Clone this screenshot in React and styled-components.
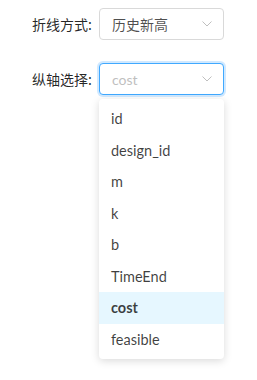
import React from "react";
import styled, { createGlobalStyle } from "styled-components";

const Global = createGlobalStyle`
  html, body { margin: 0; padding: 0; background: #fff; }
  body { font-family: Lato, "Noto Sans CJK SC", sans-serif; font-size: 14px; }
  #root { min-height: 380px; }
`;

const Page = styled.div`
  min-height: 380px;
  box-sizing: border-box;
  padding: 8px 0 0 32px;
  display: flex;
  flex-direction: column;
  gap: 23px;
`;

const Row = styled.div`
  display: flex;
  align-items: center;
  height: 32px;
`;

const Label = styled.label`
  color: rgba(0, 0, 0, 0.85);
  font-size: 14px;
  font-family: "Noto Sans CJK SC", sans-serif;
  width: 67px;
  white-space: nowrap;
`;

const Field = styled.div`
  position: relative;
  width: 125px;
  height: 32px;
`;

const SelectBox = styled.div`
  box-sizing: border-box;
  width: 125px;
  height: 32px;
  border: 1px solid ${(p) => (p.$focused ? "#40a9ff" : "#d9d9d9")};
  border-radius: 4px;
  box-shadow: ${(p) => (p.$focused ? "0 0 0 2px rgba(24,144,255,0.2)" : "none")};
  display: flex;
  align-items: center;
  padding: 0 11px 0 12px;
  background: #fff;
`;

const Value = styled.span`
  flex: 1;
  color: ${(p) => (p.$placeholder ? "#bfbfbf" : "rgba(0,0,0,0.7)")};
  font-family: Lato, "Noto Sans CJK SC", sans-serif;
  font-size: 14px;
`;

const Arrow = styled.svg`
  width: 10px;
  height: 6px;
`;

const Dropdown = styled.div`
  position: absolute;
  left: 0;
  top: 36px;
  width: 125px;
  box-sizing: border-box;
  padding: 4px 0;
  background: #fff;
  border-radius: 4px;
  box-shadow: 0 2px 8px rgba(0, 0, 0, 0.15);
  z-index: 10;
  display: flex;
  flex-direction: column;
`;

const Item = styled.div`
  box-sizing: border-box;
  height: 31.5px;
  display: flex;
  align-items: center;
  padding: 0 12px;
  font-family: Lato, "Noto Sans CJK SC", sans-serif;
  font-size: 14.5px;
  color: rgba(0, 0, 0, 0.75);
  font-weight: ${(p) => (p.$selected ? 700 : 400)};
  background: ${(p) => (p.$selected ? "#e6f7ff" : "transparent")};
`;

const DownIcon = () => (
  <Arrow viewBox="0 0 10 6">
    <path d="M0.5 0.5 L5 5 L9.5 0.5" fill="none" stroke="#bfbfbf" strokeWidth="1" />
  </Arrow>
);

const options = ["id", "design_id", "m", "k", "b", "TimeEnd", "cost", "feasible"];

export default function App() {
  return (
    <>
      <Global />
      <Page>
        <Row>
          <Label>折线方式:</Label>
          <Field>
            <SelectBox>
              <Value>历史新高</Value>
              <DownIcon />
            </SelectBox>
          </Field>
        </Row>
        <Row>
          <Label>纵轴选择:</Label>
          <Field>
            <SelectBox $focused>
              <Value $placeholder>cost</Value>
              <DownIcon />
            </SelectBox>
            <Dropdown>
              {options.map((o) => (
                <Item key={o} $selected={o === "cost"}>
                  {o}
                </Item>
              ))}
            </Dropdown>
          </Field>
        </Row>
      </Page>
    </>
  );
}
